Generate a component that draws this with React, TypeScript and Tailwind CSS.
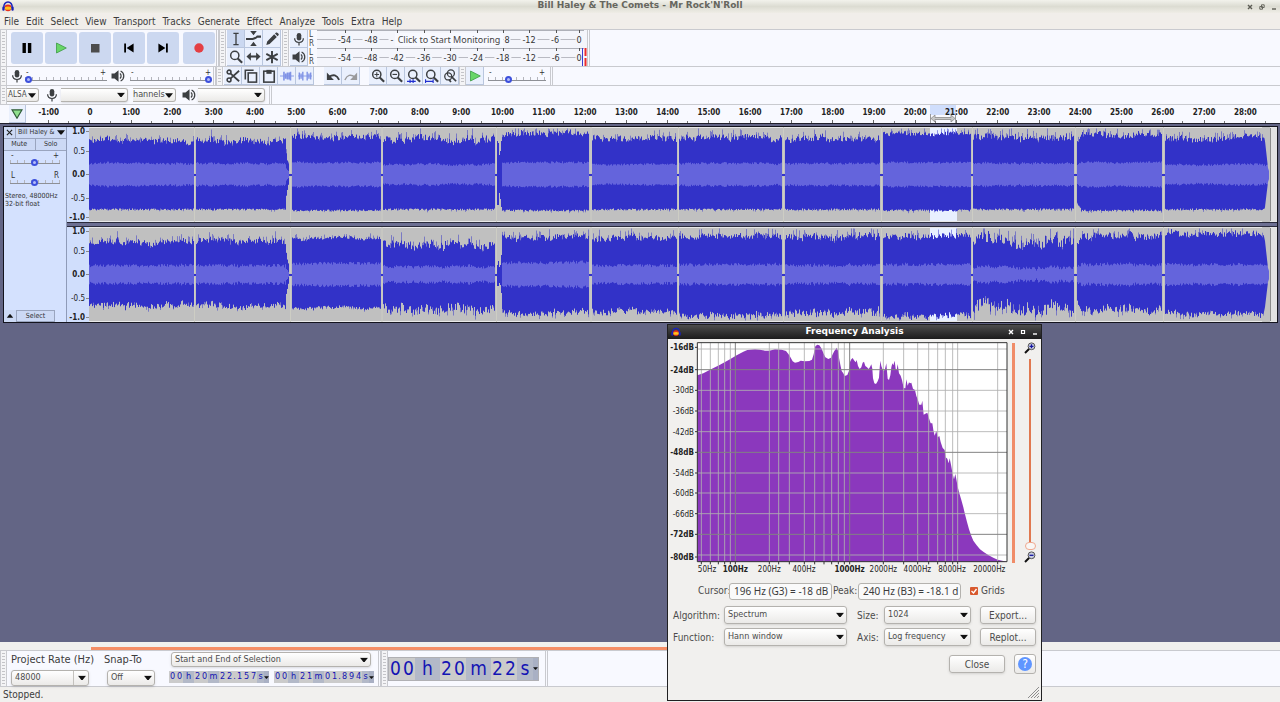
import React from "react";

const INK = "#3c3f42";

/* ---------- small shared pieces ---------- */

function Grip() {
  return (
    <div className="flex w-[7px] shrink-0 items-stretch justify-center self-stretch border-x border-[#c9cacf] bg-[#f4f4f6] py-[2px]">
      <div className="w-[3px] bg-[repeating-linear-gradient(to_bottom,#c4c4c8_0_1px,#f4f4f6_1px_3px)]" />
    </div>
  );
}

function Edge() {
  return <div className="w-[3px] shrink-0 self-stretch border-x border-[#c9cacf]" />;
}

function Arrow({ className = "" }: { className?: string }) {
  return (
    <svg viewBox="0 0 8 5" className={className} aria-hidden="true">
      <path d="M0 0.3H8L4.6 4.6H3.4Z" fill="#111" />
    </svg>
  );
}

function Picker({ label, value, className, id, look = "" }: { label: string; value: string; className: string; id: string; look?: string }) {
  return (
    <div className={`relative shrink-0 ${className}`}>
      <select
        id={id}
        aria-label={label}
        defaultValue={value}
        className={`block h-full w-full appearance-none border border-[#b4b2ae] bg-linear-to-b from-white to-[#ebeae8] pr-3 pl-[3px] text-[#4c4c4c] shadow-sm outline-none ${look === "flat" ? "rounded-r-[3px] border-l-0" : "rounded-[3px]"}`}
      >
        <option>{value}</option>
      </select>
      {look === "combo" && <span className="pointer-events-none absolute inset-y-px right-[15px] w-px bg-[#c4c2be]" />}
      <Arrow className="pointer-events-none absolute top-1/2 right-[3px] h-[5px] w-2 -translate-y-1/2" />
    </div>
  );
}

function Tool({ label, children, active = false }: { label: string; children: React.ReactNode; active?: boolean }) {
  return (
    <button
      aria-label={label}
      className={`flex h-[18px] w-[18px] shrink-0 items-center justify-center border-r border-b border-[#b9c6de] ${active ? "bg-[#cbd8f1]" : "bg-[#eaf0fd]"}`}
    >
      {children}
    </button>
  );
}

function Ico({ children, className = "h-[14px] w-[14px]", stroke = INK }: { children: React.ReactNode; className?: string; stroke?: string }) {
  return (
    <svg viewBox="0 0 16 16" className={className} fill="none" stroke={stroke} strokeWidth="1.8" aria-hidden="true">
      {children}
    </svg>
  );
}

const Mic = ({ className = "h-[14px] w-[14px]" }: { className?: string }) => (
  <Ico className={className}>
    <rect x="5.4" y="1" width="5.2" height="8.8" rx="2.6" fill={INK} stroke="none" />
    <path d="M3 7.2c0 6.4 10 6.4 10 0M8 12v3.4" strokeWidth="1.4" />
  </Ico>
);

const Speaker = ({ className = "h-[14px] w-[14px]" }: { className?: string }) => (
  <Ico className={className}>
    <path d="M.6 5.2h3.400L8.600 1.400v13.200L4 10.800H.6z" fill={INK} stroke="none" />
    <path d="M10.200 5.200c1.800 1.400 1.800 4.200 0 5.600M11 2.200c4.800 2.400 4.800 9.200 0 11.600" strokeWidth="1.400" />
  </Ico>
);

const Lens = ({ children }: { children?: React.ReactNode }) => (
  <Ico>
    <circle cx="6.600" cy="6.200" r="4.700" strokeWidth="1.700" />
    <path d="M10 9.600l5 5" strokeWidth="2.400" />
    {children}
  </Ico>
);

const Logo = ({ className }: { className: string }) => (
  <svg viewBox="0 0 12 11" className={className} aria-hidden="true">
    <ellipse cx="6" cy="6.800" rx="3.600" ry="3.400" fill="#e8301c" />
    <path d="M2.600 6.200q3.400-1.400 6.800 0v2q-3.400 1.300-6.800 0z" fill="#ffc21a" />
    <path d="M1.800 7C1 -1 11 -1 10.200 7" fill="none" stroke="#1a22b8" strokeWidth="1.500" />
    <rect x="0.300" y="5.600" width="2.300" height="4.200" rx="1.100" fill="#1a22b8" />
    <rect x="9.400" y="5.600" width="2.300" height="4.200" rx="1.100" fill="#1a22b8" />
  </svg>
);

function Slider({ label, value, className }: { label: string; value: number; className: string }) {
  return (
    <input
      type="range"
      aria-label={label}
      defaultValue={value}
      className={`m-0 block h-[7px] appearance-none bg-[linear-gradient(#8e9096,#8e9096),repeating-linear-gradient(to_right,#b4b5bc_0_1px,transparent_1px_7px)] bg-[size:100%_1px,100%_3px] bg-[position:0_4px,0_1px] bg-no-repeat [&::-webkit-slider-thumb]:h-[7px] [&::-webkit-slider-thumb]:w-[7px] [&::-webkit-slider-thumb]:appearance-none [&::-webkit-slider-thumb]:rounded-full [&::-webkit-slider-thumb]:border-2 [&::-webkit-slider-thumb]:border-[#3d50dc] [&::-webkit-slider-thumb]:bg-[#b4bcf8] ${className}`}
    />
  );
}

function SignedSlider({ label, value, left = "-", right = "+", className }: { label: string; value: number; left?: string; right?: string; className: string }) {
  return (
    <div className={`shrink-0 ${className}`}>
      <div className="flex h-[6px] justify-between px-px text-[8px] leading-[6px] text-[#333]">
        <span>{left}</span>
        <span>{right}</span>
      </div>
      <Slider label={label} value={value} className="w-full" />
    </div>
  );
}

/* ---------- toolbars ---------- */

function TransportButton({ label, children, className = "" }: { label: string; children: React.ReactNode; className?: string }) {
  return (
    <button aria-label={label} className={`flex h-8 w-8 shrink-0 items-center justify-center rounded-[3px] bg-[#ccd8f0] ${className}`}>
      <svg viewBox="0 0 12 12" className="h-3 w-3" aria-hidden="true">
        {children}
      </svg>
    </button>
  );
}

const FULL_SCALE = ["-54", "-48", "-42", "-36", "-30", "-24", "-18", "-12", "-6", "0"];

/* The monitoring button hides the middle of the recording scale. */
const RECORD_SCALE: [string, number][] = [["-54", 27.5], ["-48", 54], ["-", 75], ["8", 190], ["-12", 212], ["-6", 238], ["0", 262]];
const PLAY_SCALE: [string, number][] = FULL_SCALE.map((t, i) => [t, i === 9 ? 262 : 27.5 + i * 26.4]);

function Meter({ kind, scale, clipped = false }: { kind: string; scale: [string, number][]; clipped?: boolean }) {
  return (
    <div className="flex h-[18px] items-center">
      <div className="flex w-2 flex-col text-[8px] leading-[9px] text-[#444]">
        <span>L</span>
        <span>R</span>
      </div>
      <svg viewBox="0 0 270 18" className="h-[18px] w-[270px]" aria-label={kind}>
        <rect x="0" y="0" width="270" height="18" fill="#f4f5fb" />
        <path d="M0 .5H267" stroke="#aeb0b8" />
        <path d="M0 9.500H265" stroke="#b9bac2" />
        {PLAY_SCALE.map(([t, x]) => (
          <path key={t} d={`M${Math.round(x)}.5 0V3`} stroke="#555" />
        ))}
        {scale.map(([t, x]) => {
          const w = [0, 7, 11, 17][t.length];
          return (
            <g key={t}>
              <rect x={x - w / 2} y="4" width={w} height="11" fill="#f4f5fb" />
              <text x={x} y="12.500" textAnchor="middle" fontSize="9" fill="#333">
                {t}
              </text>
            </g>
          );
        })}
        {clipped && (
          <g>
            <path d="M265.500 0V18" stroke="#3a3ad0" />
            <path d="M268.500 0V8M268.500 10V18" stroke="#ee2c2c" strokeWidth="2" />
          </g>
        )}
      </svg>
    </div>
  );
}

function Toolbars() {
  return (
    <div className="bg-[#f8f9ff]">
      <div className="flex h-[38px] border-t border-b border-[#c9cacf]">
        <Grip />
        <div className="flex items-center gap-[2px] pr-px pl-1">
          <TransportButton label="Pause">
            <path d="M1.500 1h3.400v10H1.500zM6.900 1h3.400v10H6.900z" fill="#000" />
          </TransportButton>
          <TransportButton label="Play">
            <path d="M1.500 1l9.800 5-9.800 5z" fill="#68d668" stroke="#3d9b45" strokeWidth=".8" />
          </TransportButton>
          <TransportButton label="Stop">
            <path d="M2 2h8.500v8.500H2z" fill="#4c4c4c" />
          </TransportButton>
          <TransportButton label="Skip to start">
            <path d="M1.200 1.500h1.800v9H1.200zM10.600 1.500v9L3.600 6z" fill="#000" />
          </TransportButton>
          <TransportButton label="Skip to end">
            <path d="M9 1.500h1.800v9H9zM1.400 1.500v9l7-4.500z" fill="#000" />
          </TransportButton>
          <TransportButton label="Record" className="ml-[2px]">
            <circle cx="6" cy="6" r="4.700" fill="#e43f43" />
          </TransportButton>
        </div>
        <Edge />
        <Grip />
        <div className="grid grid-cols-[repeat(3,18px)] grid-rows-[18px_18px] px-px">
          <Tool label="Selection tool" active>
            <Ico>
              <path d="M5 1.500h6M5 14.500h6M8 1.500v13" strokeWidth="1.500" />
            </Ico>
          </Tool>
          <Tool label="Envelope tool">
            <Ico className="h-[15px] w-[17px]">
              <path d="M4.500 0h7L8 4.500zM4.500 16h7L8 11.500z" fill={INK} stroke="none" />
              <path d="M0 8.500h7q3-.5 5-2.500h4" strokeWidth="2.200" />
            </Ico>
          </Tool>
          <Tool label="Draw tool">
            <Ico>
              <path d="M1.500 14.800l1-4L10.500 2.600l3 3-8.200 8.200zM11.400 1.800l1.300-1.200q1-.4 1.800.6l.9.9q.8.9 0 1.700l-1 1z" fill={INK} stroke="none" />
            </Ico>
          </Tool>
          <Tool label="Zoom tool">
            <Lens />
          </Tool>
          <Tool label="Time shift tool">
            <Ico className="h-[15px] w-[15px]">
              <path d="M3 8h10" strokeWidth="2.200" />
              <path d="M5.200 3.600V12.400L.5 8zM10.800 3.600V12.400L15.500 8z" fill={INK} stroke="none" />
            </Ico>
          </Tool>
          <Tool label="Multi tool">
            <Ico>
              <path d="M8 1v14M1.500 4.500l13 7M14.500 4.500l-13 7" strokeWidth="2.200" />
            </Ico>
          </Tool>
        </div>
        <Grip />
        <div className="flex flex-col px-px">
          <Tool label="Record meter">
            <Mic />
          </Tool>
          <Tool label="Playback meter">
            <Speaker />
          </Tool>
        </div>
        <div className="relative">
          <Meter kind="Recording level" scale={RECORD_SCALE} />
          <Meter kind="Playback level" scale={PLAY_SCALE} clipped />
          <button className="absolute top-[3px] left-[86px] h-[13px] w-[108px] bg-[#f8f9ff] text-center font-['Noto_Sans',sans-serif] text-[9px] leading-[13px] whitespace-nowrap text-[#444]">
            Click to Start Monitoring
          </button>
        </div>
        <Edge />
      </div>

      <div className="flex h-[19px] items-center border-b border-[#c9cacf]">
        <Grip />
        <Mic className="ml-[3px] h-[14px] w-[14px] shrink-0" />
        <SignedSlider label="Recording volume" value={0} className="ml-px w-[82px]" />
        <Speaker className="ml-1 h-[14px] w-[14px] shrink-0" />
        <SignedSlider label="Playback volume" value={100} className="mr-px ml-[5px] w-[82px]" />
        <Edge />
        <Grip />
        <div className="flex pl-px">
          <Tool label="Cut">
            <Ico>
              <circle cx="3.500" cy="3.500" r="2.200" />
              <circle cx="3.500" cy="12.500" r="2.200" />
              <path d="M5 5l10 9M5 11l10-9" strokeWidth="2" />
            </Ico>
          </Tool>
          <Tool label="Copy">
            <Ico>
              <path d="M1.500 12V1.500H11" />
              <rect x="4.800" y="4.500" width="9.500" height="10.500" />
            </Ico>
          </Tool>
          <Tool label="Paste">
            <Ico>
              <rect x="2" y="2.500" width="12" height="12.500" />
              <path d="M5 1h6v4.500H5z" fill={INK} stroke="none" />
            </Ico>
          </Tool>
          <Tool label="Trim audio">
            <Ico stroke="#7f92e6">
              <path d="M0 8h16" strokeWidth="1" />
              <path d="M4.500 3v10M6.500 5v6M8.500 4v8M10.500 4v8M12 3v10" strokeWidth="1.800" />
            </Ico>
          </Tool>
          <Tool label="Silence audio">
            <Ico stroke="#7f92e6">
              <path d="M0 8h16" strokeWidth="1" />
              <path d="M1.500 4v8M3.500 5v6M5.500 3v10M10.500 3v10M12.500 5v6M14.500 4v8" strokeWidth="1.600" />
            </Ico>
          </Tool>
        </div>
        <div className="flex pl-[10px]">
          <Tool label="Undo">
            <Ico>
              <path d="M15 12.500Q11 4 3.500 9" strokeWidth="2.200" />
              <path d="M1 4v8.500h8z" fill={INK} stroke="none" />
            </Ico>
          </Tool>
          <Tool label="Redo">
            <Ico stroke="#9a9a9c">
              <path d="M1 12.500Q5 4 12.500 9" strokeWidth="1.600" />
              <path d="M15 4v8.500H7z" fill="#9a9a9c" stroke="none" />
            </Ico>
          </Tool>
        </div>
        <div className="flex pl-[9px]">
          <Tool label="Zoom in">
            <Lens>
              <path d="M4 6.200h5.200M6.600 3.600v5.200" strokeWidth="1.200" />
            </Lens>
          </Tool>
          <Tool label="Zoom out">
            <Lens>
              <path d="M4 6.200h5.200" strokeWidth="1.300" />
            </Lens>
          </Tool>
          <Tool label="Fit selection">
            <Lens>
              <path d="M0 14.200h10M3.500 11.800v4.800M7 11.800v4.800" stroke="#2230d0" strokeWidth="1.300" />
            </Lens>
          </Tool>
          <Tool label="Fit project">
            <Lens>
              <path d="M0 14.200h9.500M.6 11.800v4.800M9.300 11.800v4.800" stroke="#2230d0" strokeWidth="1.300" />
            </Lens>
          </Tool>
          <Tool label="Zoom toggle">
            <Ico>
              <circle cx="9" cy="5" r="4" strokeWidth="1.500" />
              <circle cx="6" cy="8.500" r="4" strokeWidth="1.500" />
              <path d="M10 9l5 5M7 12l2 3" strokeWidth="2" />
            </Ico>
          </Tool>
        </div>
        <Grip />
        <Tool label="Play at speed">
          <svg viewBox="0 0 12 12" className="h-3 w-3" aria-hidden="true">
            <path d="M1.500 1l9.800 5-9.800 5z" fill="#68d668" stroke="#3d9b45" strokeWidth=".8" />
          </svg>
        </Tool>
        <SignedSlider label="Playback speed" value={33} className="mr-1 ml-1 w-[58px]" />
        <Edge />
      </div>

      <div className="flex h-[19px] items-center border-b border-[#c9cacf] text-[9px]">
        <Grip />
        <button aria-label="Audio host" className="flex h-[14px] w-8 shrink-0 items-center justify-between overflow-hidden rounded-r-[3px] border border-l-0 border-[#b4b2ae] bg-linear-to-b from-white to-[#ebeae8] pr-[2px] pl-px text-[8px] text-[#4c4c4c]">
          ALSA
          <Arrow className="h-[5px] w-2 shrink-0" />
        </button>
        <Mic className="ml-[6px] h-[14px] w-[14px] shrink-0" />
        <Picker id="recdev" label="Recording device" value="" look="flat" className="ml-[2px] h-[14px] w-[67px]" />
        <button aria-label="Recording channels" className="ml-[5px] flex h-[14px] w-[43px] shrink-0 items-center justify-between overflow-hidden rounded-r-[3px] border border-l-0 border-[#b4b2ae] bg-linear-to-b from-white to-[#ebeae8] pr-[2px] text-[9px] text-[#4c4c4c]">
          hannels
          <Arrow className="h-[5px] w-2 shrink-0" />
        </button>
        <Speaker className="ml-[6px] h-[14px] w-[14px] shrink-0" />
        <Picker id="playdev" label="Playback device" value="" look="flat" className="mr-1 ml-[2px] h-[14px] w-[67px]" />
        <Edge />
      </div>
    </div>
  );
}

/* ---------- time ruler ---------- */

function TimeRuler() {
  const labels = Array.from({ length: 30 }, (_, i) => (i === 0 ? "-1:00" : i === 1 ? "0" : `${i - 1}:00`));
  return (
    <div className="relative flex h-[18px] bg-[#f8f9ff]">
      <button aria-label="Pinned play head" className="ml-[9px] flex w-[17px] shrink-0 items-center justify-center border-r border-b border-[#b9c6de] bg-[#eaf0fd]">
        <svg viewBox="0 0 12 10" className="h-[10px] w-3" aria-hidden="true">
          <path d="M1 .8h10L6 9.200z" fill="#8fe08f" stroke="#2f5a38" strokeWidth="1.200" />
        </svg>
      </button>
      <div className="absolute top-0 left-[930px] h-[10px] w-[26px] bg-[#d0defc]" />
      <div className="relative mr-[14px] ml-[2px] grid flex-1 grid-cols-[repeat(30,minmax(0,1fr))]">
        {labels.map((t) => (
          <div key={t} className="relative flex flex-col items-center justify-between text-[8px] leading-[14px] font-bold text-[#222]">
            <span className="pt-px">{t}</span>
            <span className="h-[3px] w-px bg-[#666]" />
            <span className="absolute right-0 bottom-0 h-[2px] w-px bg-[#777]" />
          </div>
        ))}
      </div>
      <svg viewBox="0 0 28 9" className="absolute top-[9px] left-[929px] h-[9px] w-[28px]" aria-hidden="true">
        <path d="M1.500 0v9M26.500 0v9" stroke="#999" />
        <path d="M2 4.500l4-3.500v2.500h16V1l4 3.500-4 3.500V5.500H6V8z" fill="#c8c8c8" stroke="#8c8c8c" strokeWidth=".8" />
      </svg>
    </div>
  );
}

/* ---------- waveforms ---------- */

type Clip = [start: number, end: number, up: number, down: number, rms: number, rough: number];

const LEFT: Clip[] = [
  [1, 106, 34, 35, 11, 4], [108, 201, 34, 35, 11, 4], [204, 293, 38, 36, 12, 4], [295, 407, 36, 35, 10, 5],
  [414, 501, 41, 36, 12, 4], [504, 589, 36, 35, 10, 4], [591, 694, 37, 35, 11, 4], [697, 792, 36, 35, 11, 4],
  [795, 883, 41, 36, 12, 3], [885, 986, 37, 35, 11, 5], [989, 1074, 40, 36, 12, 4], [1077, 1181, 37, 35, 10, 4],
];
const RIGHT: Clip[] = [
  [1, 106, 33, 31, 9, 4], [108, 201, 34, 32, 9, 4], [204, 293, 36, 34, 11, 2], [295, 407, 31, 35, 8, 6],
  [414, 501, 38, 39, 12, 4], [504, 589, 37, 37, 9, 4], [591, 694, 39, 41, 10, 4], [697, 792, 38, 39, 9, 5],
  [795, 883, 39, 42, 10, 4], [885, 986, 34, 35, 7, 8], [989, 1074, 39, 36, 10, 5], [1077, 1181, 41, 40, 10, 4],
];

function noise(seed: number) {
  let s = seed;
  return () => {
    s = (s * 1664525 + 1013904223) % 4294967296;
    return s / 4294967296;
  };
}

function columns(clips: Clip[], seed: number, loose: boolean) {
  const rnd = noise(seed);
  let peak = "";
  let soft = "";
  let rms = "";
  const mid = 47.5;
  clips.forEach(([a, b, up, down, r, rough], n) => {
    let drift = 0;
    for (let x = a; x < b; x++) {
      drift = drift * 0.8 + (rnd() - 0.5) * rough * 0.6;
      let k = 1;
      if (n === 1 && x > b - 4) k = 0.75 - (x - b + 4) * 0.15;
      if (n === 10 && x < a + 4) k = 0.8 + (x - a) * 0.05;
      const u = (up + drift + (rnd() - 0.6) * rough * 1.4) * k;
      const d = (down - (loose ? drift : 0) + (rnd() - 0.6) * (loose ? rough * 1.5 : 2)) * k;
      const spike = rnd() > 0.7 ? rnd() * (rough + 3) : 0;
      const dip = rnd() > 0.75 ? rnd() * (loose ? rough : 2) : 0;
      const q = (r + (rnd() - 0.5) * (loose ? 3 : 2) + drift * 0.3) * k;
      peak += `M${x}.5 ${(mid - u).toFixed(1)}V${(mid + d).toFixed(1)}`;
      soft += `M${x}.5 ${(mid - Math.min(46, u + spike)).toFixed(1)}V${(mid + Math.min(46, d + dip)).toFixed(1)}`;
      rms += `M${x}.5 ${(mid - q).toFixed(1)}V${(mid + q).toFixed(1)}`;
    }
  });
  return { peak, soft, rms };
}

const JOINS = [106.5, 202.5, 294, 408.5, 503, 590.5, 695.5, 793.5, 884.5, 987.5, 1075.5];

function Wave({ clips, seed, label, loose = false }: { clips: Clip[]; seed: number; label: string; loose?: boolean }) {
  const { peak, soft, rms } = columns(clips, seed, loose);
  const blip = loose
    ? "M409 38h1v-4h1v6h1v-2h1v-10h1V66h-1v-8h-1V56h-1v3h-2z"
    : "M409 14h1v2h1v12h1v-4h1V14h1V80h-1v-8h-1V66h-1V78h-2z";
  return (
    <svg viewBox="0 0 1188 95" preserveAspectRatio="none" className="block h-[95px] w-full" role="img" aria-label={label}>
      <rect width="1188" height="95" fill="#c0c0c0" />
      <rect x="841" width="27" height="95" fill="#e8f0ff" />
      <rect x="1182" width="6" height="95" fill="#e2e2e2" />
      <path d="M1181.500 0V95" stroke="#8c8c8c" />
      <path d="M0 .5H1188M0 94.500H1188" stroke="#e8e8e8" />
      <g transform="translate(-1 0)">
        <path d="M0 48H1181" stroke="#3232c8" strokeWidth="2" />
        {JOINS.map((x) => (
          <path key={x} d={`M${x} 0V46M${x} 50V95`} stroke="#cdcdc4" />
        ))}
        <path d={soft} stroke="#3232c8" strokeOpacity=".5" />
        <path d={peak} stroke="#3232c8" />
        <path d={blip} fill="#3232c8" />
        <path d={rms} stroke="#6464dc" />
        <path d="M1174 0H1182V47L1180 41L1177 14ZM1182 95H1174L1177 80L1180 55L1182 49Z" fill="#c0c0c0" />
      </g>
    </svg>
  );
}

const SCALE: [string, string][] = [
  ["1.0", "font-bold"],
  ["0.5", "mt-[11px]"],
  ["0.0", "mt-[14px] font-bold"],
  ["-0.5", "mt-[15px]"],
  ["-1.0", "mt-[10px] font-bold"],
];

function Scale() {
  return (
    <div className="flex h-[95px] w-[22px] shrink-0 flex-col bg-[#d0defc] text-[8px] leading-[9px] text-[#222]">
      {SCALE.map(([t, look]) => (
        <span key={t} className={`flex items-center justify-end gap-px ${look}`}>
          {t}
          <i className="h-px w-[3px] bg-[#888]" />
        </span>
      ))}
    </div>
  );
}

function Track() {
  return (
    <section aria-label="Audio track" className="mt-[2px] mr-[2px] ml-[3px] flex border border-[#14141e] bg-[#d4e1fe]">
      <div className="flex w-[63px] shrink-0 flex-col border-r border-[#8f9bb8] text-[8px] text-[#333]">
        <div className="flex h-3 border-b border-[#9aa5bf] bg-[#ccd9f5]">
          <button aria-label="Close track" className="flex w-3 items-center justify-center border-r border-[#9aa5bf]">
            <svg viewBox="0 0 8 8" className="h-[7px] w-[7px]" aria-hidden="true">
              <path d="M1 1l6 6M7 1L1 7" stroke="#222" strokeWidth="1.300" />
            </svg>
          </button>
          <button className="flex flex-1 items-center justify-between gap-px overflow-hidden pr-px pl-[2px] text-[7px] whitespace-nowrap">
            Bill Haley &amp;
            <Arrow className="h-[5px] w-2 shrink-0" />
          </button>
        </div>
        <div className="flex h-3 border-b border-[#9aa5bf] bg-[#ccd9f5] text-[7px]">
          <button className="flex-1 border-r border-[#9aa5bf]">Mute</button>
          <button className="flex-1">Solo</button>
        </div>
        <div className="flex flex-col gap-[7px] px-[6px] pt-[2px]">
          <SignedSlider label="Gain" value={48} className="w-full" />
          <SignedSlider label="Pan" value={48} left="L" right="R" className="w-full" />
        </div>
        <div className="mt-[6px] pl-px text-[7px] leading-2 whitespace-nowrap">
          Stereo, 48000Hz
          <br />
          32-bit float
        </div>
        <div className="mt-auto flex h-3 text-[7px]">
          <button aria-label="Collapse track" className="flex w-3 items-center justify-center bg-[#ccd9f5]">
            <Arrow className="h-1 w-2 rotate-180" />
          </button>
          <button className="w-[39px] border border-[#9aa5bf] bg-[#ccd9f5]">Select</button>
        </div>
      </div>
      <div className="min-w-0 flex-1">
        <div className="flex">
          <Scale />
          <div className="min-w-0 flex-1">
            <Wave clips={LEFT} seed={7} label="Left channel" />
          </div>
        </div>
        <div className="h-[5px] border-y border-[#2a2b3c] bg-[#6c6f92]" />
        <div className="flex">
          <Scale />
          <div className="min-w-0 flex-1">
            <Wave clips={RIGHT} seed={23} label="Right channel" loose />
          </div>
        </div>
      </div>
    </section>
  );
}

/* ---------- frequency analysis window ---------- */

const DB: [string, number, boolean][] = [
  ["-16dB", 82, true], ["-24dB", 149, true], ["-30dB", 211, false], ["-36dB", 273, false], ["-42dB", 335, false], ["-48dB", 397, true],
  ["-54dB", 459, false], ["-60dB", 519, false], ["-66dB", 581, false], ["-72dB", 643, true], ["-80dB", 711, true],
];
const HZ: [string, number, boolean][] = [
  ["50Hz", 141, false], ["100Hz", 226, true], ["200Hz", 328, false], ["400Hz", 432, false], ["1000Hz", 569, true],
  ["2000Hz", 670, false], ["4000Hz", 772, false], ["8000Hz", 876, false], ["20000Hz", 988, false],
];
const VLINES = [124, 151, 175, 194, 211, 328, 356, 388, 433, 464, 492, 515, 535, 553, 670, 731, 773, 806, 833, 856, 878, 893, 1013];

function Spectrum() {
  return (
    <svg viewBox="30 60 1020 714" className="h-[238px] w-[340px] shrink-0" role="img" aria-label="Spectrum plot">
      <rect x="112" y="68" width="929" height="657" fill="#fff" />
      <path
        fill="#8b38bd"
        d="M112 725V166L130 160L150 149L180 134L210 118L230 106L250 95L262 90L285 88L300 89L315 92L328 92L345 88L365 89L378 93L388 106L398 124L405 128L415 126L422 122L435 124L448 123L456 119L461 103L466 79L472 74L478 76L485 86L491 101L496 112L505 117L513 113L518 103L523 93L527 88L530 83L534 92L537 113L541 134L545 153L550 160L554 168L562 165L567 152L570 126L574 118L578 114L582 121L587 127L590 120L594 138L599 147L604 142L608 128L612 125L616 138L621 142L626 147L630 141L634 133L637 146L639 175L643 190L648 192L653 184L657 173L659 144L661 122L664 138L667 146L671 154L675 147L679 130L683 176L687 180L691 166L694 142L697 130L700 136L704 122L707 146L710 151L713 132L717 160L722 167L726 180L731 204L736 205L739 178L743 197L747 187L750 190L754 188L759 206L765 210L769 228L773 238L778 254L784 254L787 242L791 284L796 281L802 278L806 292L812 310L817 310L820 330L824 347L829 332L833 352L838 348L842 366L848 384L854 390L857 412L862 416L866 430L869 415L873 434L878 462L882 478L886 462L889 478L893 500L898 520L904 540L910 562L915 583L921 606L927 628L934 648L940 662L950 676L960 688L972 697L986 706L1000 713L1013 719L1030 723L1041 725Z"
      />
      <g stroke="#b0b0b0" strokeWidth="3" strokeOpacity=".85">
        {VLINES.map((x) => (
          <path key={x} d={`M${x} 68V725`} />
        ))}
        {[87, 211, 273, 335, 459, 519, 581, 705].map((y) => (
          <path key={y} d={`M112 ${y}H1041`} />
        ))}
      </g>
      <g stroke="#828282" strokeWidth="3">
        {[226, 569].map((x) => (
          <path key={x} d={`M${x} 68V725`} />
        ))}
        {[149, 397, 643].map((y) => (
          <path key={y} d={`M112 ${y}H1041`} />
        ))}
      </g>
      <path d="M112 68H1041V725H112Z" fill="none" stroke="#333" strokeWidth="3" />
      <g fill="#222" stroke="none">
        {DB.map(([t, y, bold]) => (
          <g key={t}>
            <path d={`M105 ${y}H112`} stroke="#333" strokeWidth="3" />
            <text x="102" y={y + 9} textAnchor="end" fontSize="24" fontWeight={bold ? 700 : 400}>
              {t}
            </text>
          </g>
        ))}
        {[...VLINES, 226, 569].map((x) => (
          <path key={x} d={`M${x} 725V733`} stroke="#333" strokeWidth="3" />
        ))}
        {HZ.map(([t, x, bold]) => (
          <text key={t} x={x} y="757" textAnchor="middle" fontSize="24" fontWeight={bold ? 700 : 400}>
            {t}
          </text>
        ))}
      </g>
    </svg>
  );
}

function MiniLens({ plus = false }: { plus?: boolean }) {
  return (
    <svg viewBox="0 0 12 12" className="h-3 w-3" aria-hidden="true">
      <path d="M1 11l4.500-4.500" stroke="#111" strokeWidth="2" />
      <circle cx="7.500" cy="4.300" r="3.400" fill="#c9cede" stroke="#555" />
      <path d={plus ? "M5.500 4.300h4M7.500 2.300v4" : "M5.500 4.300h4"} stroke="#1414a0" strokeWidth="1.300" />
    </svg>
  );
}

const dialogButton = "h-[18px] w-14 rounded-[3px] border border-[#b4b2ae] bg-linear-to-b from-white to-[#ebeae8] text-[#4c4c4c] shadow-sm";
const readout = "h-[17px] w-[103px] rounded-[3px] border border-[#b4b2ae] bg-[#fafafa] pl-1 font-['Noto_Sans',sans-serif] text-[10px] text-[#3c3c3c]";

function FrequencyWindow() {
  return (
    <section aria-label="Frequency Analysis" className="absolute top-[324px] left-[667px] w-[375px] border border-[#202022] bg-[#f1f0ee] text-[10px] text-[#4c4c4c]">
      <header className="relative flex h-[14px] items-center bg-linear-to-b from-[#4d4d4d] to-[#1c1c1c] px-[3px] text-white">
        <Logo className="h-[10px] w-[10px]" />
        <h2 className="absolute inset-x-0 top-0 text-center font-['DejaVu_Sans',sans-serif] text-[9px] leading-3 font-bold">Frequency Analysis</h2>
        <div className="relative ml-auto flex gap-[6px]">
          <WindowIcons stroke="#fff" />
        </div>
      </header>
      <div className="flex pt-px pl-[2px]">
        <Spectrum />
        <div className="mt-[3px] ml-[2px] h-[220px] w-[3px] bg-[#f08c68]" />
        <div className="mt-[2px] ml-[7px] flex h-[226px] w-4 flex-col items-center">
          <button aria-label="Zoom in vertically" className="h-3">
            <MiniLens plus />
          </button>
          <input
            type="range"
            aria-label="Vertical zoom"
            defaultValue={100}
            className="mt-[5px] block h-[191px] w-[11px] appearance-none bg-[linear-gradient(#e07850,#e07850)] bg-[size:2px_183px] bg-[position:center_top] bg-no-repeat [writing-mode:vertical-lr] [&::-webkit-slider-thumb]:h-2 [&::-webkit-slider-thumb]:w-[11px] [&::-webkit-slider-thumb]:appearance-none [&::-webkit-slider-thumb]:rounded-full [&::-webkit-slider-thumb]:border [&::-webkit-slider-thumb]:border-[#f0a890] [&::-webkit-slider-thumb]:bg-[#f8f7f5]"
          />
          <button aria-label="Zoom out vertically" className="mt-px h-3">
            <MiniLens />
          </button>
        </div>
      </div>
      <div className="flex items-center pt-1 pl-[30px] leading-[18px]">
        <label htmlFor="cursor" className="w-[31px]">Cursor:</label>
        <input id="cursor" readOnly value="196 Hz (G3) = -18 dB" className={readout} />
        <label htmlFor="peak" className="w-[26px] pl-px">Peak:</label>
        <input id="peak" readOnly value="240 Hz (B3) = -18.1 d" className={readout} />
        <label className="ml-[9px] flex items-center gap-[3px]">
          <input type="checkbox" defaultChecked className="h-2 w-2 appearance-none rounded-[1px] bg-[#d8592e]" />
          <svg viewBox="0 0 8 8" className="pointer-events-none -ml-[11px] h-2 w-2" aria-hidden="true">
            <path d="M1.500 4l2 2 3-4" fill="none" stroke="#fff" strokeWidth="1.300" />
          </svg>
          Grids
        </label>
      </div>
      <div className="grid grid-cols-[51px_123px_10px_27px_87px_9px_56px] items-center gap-y-1 pt-[6px] pl-[5px]">
        <label htmlFor="algorithm">Algorithm:</label>
        <Picker id="algorithm" label="Algorithm" value="Spectrum" className="h-[18px] w-[123px] text-[9px]" />
        <span />
        <label htmlFor="size">Size:</label>
        <Picker id="size" label="Size" value="1024" className="h-[18px] w-[87px] text-[9px]" />
        <span />
        <button className={dialogButton}>Export...</button>
        <label htmlFor="function">Function:</label>
        <Picker id="function" label="Function" value="Hann window" className="h-[18px] w-[123px] text-[9px]" />
        <span />
        <label htmlFor="axis">Axis:</label>
        <Picker id="axis" label="Axis" value="Log frequency" className="h-[18px] w-[87px] text-[9px]" />
        <span />
        <button className={dialogButton}>Replot...</button>
      </div>
      <div className="flex items-center justify-end gap-[9px] pt-2 pr-[5px]">
        <button className={dialogButton}>Close</button>
        <button aria-label="Help" className="flex h-5 w-[22px] items-center justify-center rounded-[3px] border border-[#b4b2ae] bg-linear-to-b from-white to-[#ebeae8]">
          <span className="h-[14px] w-[14px] rounded-full bg-[#5f95ff] text-center text-[12px] leading-[14px] text-white">?</span>
        </button>
      </div>
      <div className="flex h-[26px] items-end justify-end p-[2px]">
        <svg viewBox="0 0 12 12" className="h-3 w-3" aria-hidden="true">
          <path d="M1 12L12 1M4 12l8-8M7 12l5-5M10 12l2-2" stroke="#8d8d8d" strokeWidth="1" />
        </svg>
      </div>
    </section>
  );
}

function WindowIcons({ stroke, stacked = false }: { stroke: string; stacked?: boolean }) {
  return (
    <>
      <button aria-label="Close">
        <svg viewBox="0 0 6 6" className="h-[6px] w-[6px]">
          <path d="M1 1l4 4M5 1L1 5" stroke={stroke} strokeWidth="1.400" />
        </svg>
      </button>
      <button aria-label="Maximize">
        <svg viewBox="0 0 6 6" className="h-[6px] w-[6px]">
          <path d={stacked ? "M2.500 .8h2.700v2.700h-2.700zM.8 2.500h2.700v2.700H.8z" : "M1.500 1.500h3v3h-3z"} fill="none" stroke={stroke} strokeWidth={stacked ? "0.900" : "1.200"} />
        </svg>
      </button>
      <button aria-label="Minimize">
        <svg viewBox="0 0 6 6" className="h-[6px] w-[6px]">
          <path d="M1 5h4" stroke={stroke} strokeWidth="1.400" />
        </svg>
      </button>
    </>
  );
}

/* ---------- selection bar ---------- */

const FIELD = {
  small: { box: "h-3 text-[9px]", digit: "w-[7px]", unit: "w-[11px]", last: "w-[7px]" },
  large: { box: "h-6 border border-[#b0b0b4] text-[19px]", digit: "w-[13px]", unit: "w-[25px]", last: "w-[16px]" },
};

function TimeField({ label, parts, size }: { label: string; parts: [string, string][]; size: "small" | "large" }) {
  const s = FIELD[size];
  return (
    <div role="group" aria-label={label} className={`flex shrink-0 text-[#1414b4] ${s.box}`}>
      {parts.map(([digits, unit], i) => (
        <React.Fragment key={i}>
          <span className="flex items-center bg-[#cbcbcb]">
            {digits.split("").map((c, j) => (
              <span key={j} className={`flex items-center justify-center ${c === "." ? "w-[3px]" : s.digit}`}>
                {c}
              </span>
            ))}
          </span>
          <span className={`flex items-center justify-center bg-[#b3b9c8] ${unit === "s" ? s.last : s.unit}`}>{unit}</span>
        </React.Fragment>
      ))}
      <button aria-label={`${label} format`} className="flex w-[5px] items-center justify-center bg-[#a9b0c4]">
        <Arrow className="h-[3px] w-[5px]" />
      </button>
    </div>
  );
}

function SelectionBar() {
  return (
    <div className="flex h-[37px] border-y border-[#c9cacf] bg-[#f8f9ff] text-[9px] text-[#3c3c3c]">
      <Grip />
      <div className="flex w-[92px] flex-col gap-[2px] pl-1">
        <label htmlFor="rate" className="text-[11px] leading-[17px] whitespace-nowrap">Project Rate (Hz)</label>
        <Picker id="rate" label="Project Rate" value="48000" look="combo" className="h-4 w-[78px]" />
      </div>
      <div className="flex w-[70px] flex-col gap-[2px] pl-[5px]">
        <label htmlFor="snap" className="text-[11px] leading-[17px]">Snap-To</label>
        <Picker id="snap" label="Snap-To" value="Off" className="ml-[3px] h-4 w-12" />
      </div>
      <div className="flex w-[209px] flex-col gap-1 pt-px">
        <Picker id="mode" label="Selection mode" value="Start and End of Selection" className="ml-[2px] h-[15px] w-[200px]" />
        <div className="flex gap-[5px]">
          <TimeField label="Selection start" size="small" parts={[["00", "h"], ["20", "m"], ["22.157", "s"]]} />
          <TimeField label="Selection end" size="small" parts={[["00", "h"], ["21", "m"], ["01.894", "s"]]} />
        </div>
      </div>
      <Edge />
      <Grip />
      <div className="flex items-center pr-[6px]">
        <TimeField label="Audio position" size="large" parts={[["00", "h"], ["20", "m"], ["22", "s"]]} />
      </div>
      <Edge />
    </div>
  );
}

const MENUS = ["File", "Edit", "Select", "View", "Transport", "Tracks", "Generate", "Effect", "Analyze", "Tools", "Extra", "Help"];

export default function App() {
  return (
    <div className="relative flex min-h-screen flex-col bg-[#f1f0ee] font-['DejaVu_Sans_Condensed','DejaVu_Sans',sans-serif] text-[#3c3c3c]">
      <header className="relative flex h-[13px] items-center bg-linear-to-b from-[#f2f2ec] via-[#dcdcd2] to-[#efede6] px-[2px]">
        <Logo className="h-[11px] w-3" />
        <h1 className="absolute inset-x-0 top-0 text-center font-['DejaVu_Sans',sans-serif] text-[9px] leading-[10px] font-bold text-[#66665e]">
          Bill Haley &amp; The Comets - Mr Rock'N'Roll
        </h1>
        <div className="relative ml-auto flex gap-[6px] pr-px">
          <WindowIcons stroke="#5c5c54" stacked />
        </div>
      </header>
      <nav className="flex h-4 items-center gap-[7px] bg-[#f1eeea] pl-1 text-[10px]">
        {MENUS.map((m) => (
          <button key={m}>{m}</button>
        ))}
      </nav>
      <Toolbars />
      <TimeRuler />
      <main className="flex-1 border-t border-[#20202c] bg-[#636585]">
        <Track />
      </main>
      <div className="flex h-2 items-end bg-[#f1f0ee]">
        <div className="ml-[91px] h-[3px] w-[600px] bg-[#f58e66]" />
      </div>
      <SelectionBar />
      <footer className="h-[15px] pl-[3px] text-[10px] leading-[15px]">Stopped.</footer>
      <FrequencyWindow />
    </div>
  );
}
